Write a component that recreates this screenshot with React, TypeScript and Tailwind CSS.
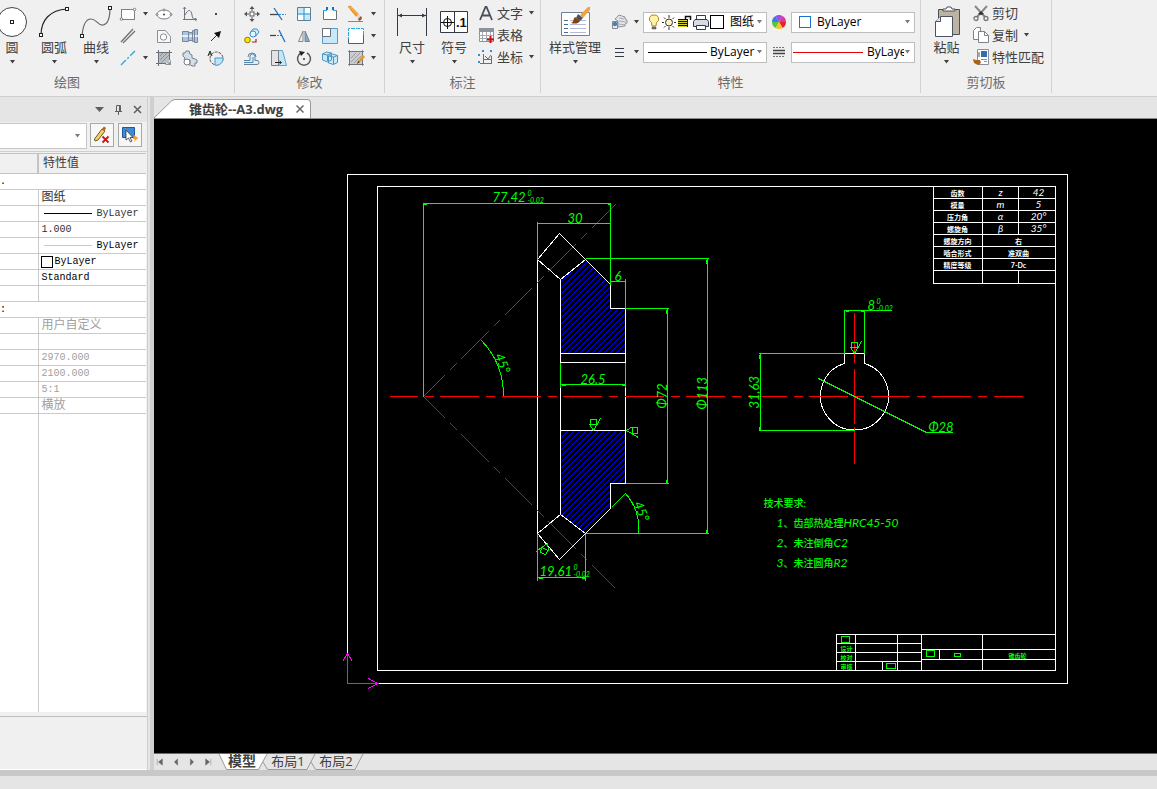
import type { ReactNode } from "react";
import { clsx } from "clsx";

const UI_FONT = "font-['Open_Sans','Noto_Sans_CJK_SC',sans-serif]";
const GRID_FONT = "font-['Liberation_Mono','Noto_Sans_CJK_SC',monospace]";

function Caret({ className = "text-[#404040]" }: Readonly<{ className?: string }>) {
  return (
    <svg width="7" height="4" viewBox="0 0 7 4" className={clsx("shrink-0", className)} aria-hidden="true">
      <path d="M1 0h5L3.500 3.500z" fill="currentColor" />
    </svg>
  );
}

type IconProps = Readonly<{ children: ReactNode; size?: number }>;

function Icon({ children, size = 18 }: IconProps) {
  return (
    <svg width={size} height={size} viewBox={`0 0 ${size} ${size}`} fill="none" className="shrink-0" aria-hidden="true">
      {children}
    </svg>
  );
}

/* ---------- draw icons ---------- */

const Grip = ({ x, y }: { x: number; y: number }) => (
  <rect x={x - 1.5} y={y - 1.5} width="3" height="3" fill="#fff" stroke="#222" />
);

const CircleIcon = () => (
  <svg width="24" height="32" viewBox="0 0 24 32" className="overflow-visible" aria-hidden="true">
    <circle cx="12" cy="16" r="14.500" fill="#fff" stroke="#3c4350" />
    <Grip x={12} y={16} />
  </svg>
);

const ArcIcon = () => (
  <svg width="32" height="32" viewBox="0 0 32 32" fill="none" aria-hidden="true">
    <path d="M3 29C3 14 12 4 29 3" stroke="#222" strokeWidth="1.200" />
    <Grip x={3} y={29} />
    <Grip x={29} y={3} />
  </svg>
);

const CurveIcon = () => (
  <svg width="32" height="32" viewBox="0 0 32 32" fill="none" aria-hidden="true">
    <path d="M2 30C3 18 6 13 11 13c6 0 7 7 12 6 5-1 7-9 7-17" stroke="#666" strokeWidth="1.200" />
    <Grip x={2} y={30} />
    <Grip x={30} y={2} />
  </svg>
);

const RectIcon = () => (
  <Icon>
    <rect x="2.500" y="4.500" width="13" height="10" fill="#fff" stroke="#7a7f88" />
    <circle cx="2.500" cy="14" r="1.300" fill="#fff" stroke="#7a7f88" />
    <circle cx="15.500" cy="4.500" r="1.300" fill="#fff" stroke="#7a7f88" />
  </Icon>
);

const EllipseIcon = () => (
  <Icon>
    <ellipse cx="9" cy="9.500" rx="7" ry="4.500" fill="#fff" stroke="#7a7f88" />
    <circle cx="9" cy="9.500" r="1" fill="#444" />
    <circle cx="2" cy="9.500" r="1" fill="#fff" stroke="#7a7f88" />
    <circle cx="9" cy="5" r="1" fill="#fff" stroke="#7a7f88" />
    <circle cx="16" cy="9.500" r="1" fill="#fff" stroke="#7a7f88" />
  </Icon>
);

const GraphIcon = () => (
  <Icon>
    <path d="M3.500 2v13M2 14.500h14M4 10c3-6 6-6 7 0s2 3 4 4" stroke="#70767f" />
    <path d="M2 4l1.500-2L5 4M14 13l2 1.500-2 1.500" stroke="#70767f" strokeWidth=".8" />
  </Icon>
);

const PointIcon = () => (
  <Icon>
    <rect x="8" y="8" width="2" height="2" fill="#444" />
  </Icon>
);

const ParallelIcon = () => (
  <Icon>
    <path d="M2 15L14 2M4 16L16 4" stroke="#6b7078" strokeWidth="1.300" />
  </Icon>
);

const HoleIcon = () => (
  <Icon>
    <path d="M2.500 3.500h8l5 6v6h-13z" fill="#f8f8f8" stroke="#8a8f98" />
    <circle cx="8.500" cy="10" r="3.200" fill="#fff" stroke="#8a8f98" />
  </Icon>
);

const ShaftIcon = () => (
  <Icon>
    <path d="M1.500 4.500h6v1h4v-2h2v-1h3v13h-3v-1h-2v-1h-4v1h-6z" fill="#a9c3e4" stroke="#7a8798" />
    <path d="M1 9h16" stroke="#fff" strokeWidth="1.500" />
    <path d="M7.500 5v9M11.500 4v10M13.500 3v12" stroke="#7a8798" />
  </Icon>
);

const ArrowIcon = () => (
  <Icon>
    <path d="M4 14l6-6" stroke="#333" />
    <path d="M14 4l-2 7-5-5z" fill="#111" />
  </Icon>
);

const CenterlineIcon = () => (
  <Icon>
    <path d="M2 16L16 2" stroke="#29abe2" strokeWidth="1.400" strokeDasharray="7 2 2 2" />
  </Icon>
);

const HatchIcon = () => (
  <Icon>
    <rect x="4" y="4" width="10" height="10" fill="#b9bdc4" />
    <path d="M3.500 1v16M14.500 1v10M1 3.500h16M1 14.500h10" stroke="#6b7078" />
    <path d="M5 7l3-3M5 11l7-7M6 14l8-8" stroke="#8d929a" />
    <path d="M10 15c4 0 5-2 6-5v6h-5z" fill="#8d929a" />
  </Icon>
);

const GearIcon = () => (
  <Icon>
    <path d="M2 7V4h2l1-2h3l1 3 2 1v3l3 1 2 1v3h-2v3h-3l-1-1H8" fill="#d5deeb" stroke="#77808d" />
    <path d="M2 7l2 2-1 2h6v4" fill="#d5deeb" stroke="#77808d" />
    <circle cx="6" cy="13" r="3" fill="#fff" stroke="#77808d" />
  </Icon>
);

const RegionIcon = () => (
  <Icon>
    <circle cx="9.500" cy="9.500" r="6.500" stroke="#555" strokeDasharray="3 1" />
    <path d="M8 9h8a6.500 6.500 0 0 1-8 7z" fill="#bfe4f7" stroke="#4a9bd0" />
    <path d="M1 7l2-5 2 5M2 5h2" stroke="#222" />
  </Icon>
);

/* ---------- modify icons ---------- */

const MoveIcon = () => (
  <Icon>
    <rect x="7" y="7" width="4" height="4" fill="#fff" stroke="#555" />
    <path d="M9 1l2.500 3h-5zM9 17l2.500-3h-5zM1 9l3-2.500v5zM17 9l-3-2.500v5z" fill="#555" />
    <path d="M9 3v3M9 12v3M3 9h3M12 9h3" stroke="#555" />
  </Icon>
);

const TrimIcon = () => (
  <Icon>
    <path d="M1 9.500h8" stroke="#444" strokeWidth="1.300" />
    <path d="M10 9.500h7" stroke="#2f8fd8" strokeDasharray="2 1" />
    <path d="M5 3l8 12" stroke="#1a6fc0" strokeWidth="1.300" />
  </Icon>
);

const ArrayIcon = () => (
  <Icon>
    <path d="M2.500 2.500h13v13h-13z" fill="#c6e9fa" stroke="#5a7f99" />
    <path d="M3 10h5v5H3zM10 3h5v5h-5z" fill="#fff" />
    <path d="M9 3v12M3 9h12" stroke="#3c93cc" />
  </Icon>
);

const BreakIcon = () => (
  <Icon>
    <path d="M2.500 5.500h13v9h-13z" fill="#fff" stroke="#6b7078" />
    <path d="M5 5h8" stroke="#f0f0f0" strokeWidth="3" />
    <path d="M3 5.500h3M12 5.500h3" stroke="#29abe2" />
    <path d="M5 2h2v3H5zM11 2h2v3h-2z" fill="#1a6fc0" />
  </Icon>
);

const PencilIcon = () => (
  <Icon>
    <path d="M1 2l3-1 8 8-3 3z" fill="#f4a93c" />
    <path d="M3 4l7 7M1 2l3-1" stroke="#d98c1c" />
    <path d="M9 12l3-3 2 2-3 3z" fill="#d9dbe0" />
    <path d="M11 14l3-3 1 2-1 2-2 1z" fill="#a1531c" />
    <path d="M1 16.500h15" stroke="#888" />
  </Icon>
);

const CopyObjIcon = () => (
  <Icon>
    <path d="M7 6l3-4h4l2 3-3 4H9z" fill="#d2ecfa" stroke="#3c93cc" />
    <circle cx="10" cy="7" r="3" stroke="#3c93cc" fill="#e4f4fc" />
    <circle cx="4.500" cy="13" r="2.800" fill="#ffe600" stroke="#8a7a00" />
    <path d="M9 15h4v-3" stroke="#a11d2b" strokeWidth="1.200" />
  </Icon>
);

const ExtendIcon = () => (
  <Icon>
    <path d="M1 8.500h6" stroke="#444" strokeWidth="1.300" />
    <path d="M8 8.500h5" stroke="#2f8fd8" strokeDasharray="2 1" />
    <path d="M10 3l6 12" stroke="#1a6fc0" strokeWidth="1.300" />
  </Icon>
);

const MirrorIcon = () => (
  <Icon>
    <path d="M8 4v10.500H3.500z" fill="#eee" stroke="#888" />
    <path d="M10 4v10.500h4.500z" fill="#8fa7bd" stroke="#6e8498" />
  </Icon>
);

const ScaleIcon = () => (
  <Icon>
    <path d="M1.500 1.500h15v15h-15z" fill="#c6e9fa" stroke="#5a9cc4" />
    <path d="M1.500 1.500h8v8h-8z" fill="#fff" stroke="#6b7078" />
  </Icon>
);

const StretchBoxIcon = () => (
  <Icon>
    <path d="M2 2h15v14H2z" fill="#fff" />
    <path d="M1.500 14V1.500H16.500V14" stroke="#29abe2" strokeDasharray="4 1" />
    <path d="M1.500 12v4.500h15V8" stroke="#555d68" />
  </Icon>
);

const OffsetIcon = () => (
  <Icon>
    <path d="M1 11.500h6v-4a2 2 0 0 1 5 0v4h2a2 2 0 0 1 0 4H1" stroke="#6b8197" fill="#e0eef8" />
    <path d="M1 13.500h9V8" stroke="#4a88b5" />
    <path d="M5 8a4 4 0 0 1 8 0" stroke="#4a88b5" />
  </Icon>
);

const TaperIcon = () => (
  <Icon>
    <path d="M9.500 1.500h4l4 15h-8z" fill="#c3e7f9" stroke="#59a8d4" />
    <path d="M2.500 1.500h7v15h-7z" fill="#e3e3e3" stroke="#7a7f88" />
    <path d="M6 13.500h6M10.500 12l2 1.500-2 1.500" stroke="#222" />
  </Icon>
);

const RotateIcon = () => (
  <Icon>
    <path d="M6 4A6.500 6.500 0 1 0 12 4" stroke="#555" strokeWidth="1.500" />
    <path d="M4 2l6 1-4 4z" fill="#222" />
    <circle cx="9" cy="10" r="1" fill="#333" />
  </Icon>
);

const BlocksIcon = () => (
  <Icon>
    <path d="M1.500 5l4-2 5 1v7l-4 2-5-2zM7.500 7l4-2 5 1.500v7l-4 2-5-1.500z" fill="#c9e9f9" stroke="#4c94c2" />
    <path d="M1.500 5l5 1v6M6.500 6l4-2M7.500 7l5 1v7M12.500 8l4-1.500" stroke="#4c94c2" />
  </Icon>
);

const HatchEditIcon = () => (
  <Icon>
    <path d="M2.500 2.500h13v13h-13z" fill="#c9ccd1" stroke="#70757d" />
    <path d="M1 2.500h16M1 15.500h16M2.500 1v16M15.500 1v16" stroke="#70757d" strokeWidth=".8" />
    <path d="M4 9l5-5M4 13l9-9M7 14l7-7" stroke="#9a9ea5" />
    <path d="M11 12l5-6 2 2-5 5z" fill="#e5952c" />
    <path d="M11 12l-1 3 3-2z" fill="#5a2d0c" />
  </Icon>
);

/* ---------- annotate, properties and clipboard icons ---------- */

const DimensionIcon = () => (
  <svg width="32" height="32" viewBox="0 0 32 32" fill="none" aria-hidden="true">
    <path d="M1.500 2v28M30.500 2v28" stroke="#333a45" />
    <path d="M2 9.500h28" stroke="#333a45" />
    <path d="M2 9.500l4-2v4zM30 9.500l-4-2v4z" fill="#333a45" />
  </svg>
);

const SymbolIcon = () => (
  <svg width="32" height="32" viewBox="0 0 32 32" fill="none" aria-hidden="true">
    <path d="M2.500 5.500h27v21h-27z" fill="#fff" stroke="#333a45" />
    <path d="M16.500 5v22" stroke="#333a45" />
    <circle cx="9.500" cy="16.500" r="4" stroke="#111" />
    <path d="M9.500 10v13M3 16.500h13" stroke="#111" />
    <text x="18" y="21" className="text-[13px] font-bold font-['Liberation_Sans']" fill="#111">
      .1
    </text>
  </svg>
);

const LetterIcon = () => (
  <Icon>
    <path d="M3 16L8.500 3h1L15 16M5 11.500h8" stroke="#4a505a" strokeWidth="1.800" />
  </Icon>
);

const TableIcon = () => (
  <Icon>
    <path d="M2.500 2.500h14v13h-14z" fill="#fff" stroke="#8d939c" />
    <path d="M2 2h15v4H2z" fill="#8d939c" />
    <path d="M2 9.500h14M2 12.500h14M5.500 6v9M9.500 6v9M13.500 6v9" stroke="#a4a9b1" />
    <path d="M13.500 10v7M10 13.500h7" stroke="#c4141c" strokeWidth="2" />
  </Icon>
);

const CoordIcon = () => (
  <Icon>
    <path d="M6.500 6v10M3 15.500h11M8 8l3 3 3-4M14.500 8v8M7 11.500h7" stroke="#6b7078" />
    <path d="M6 2v2M14 2v2M2 6v2M2 13v2" stroke="#2f8fd8" strokeWidth="2" />
  </Icon>
);

const StyleIcon = () => (
  <svg width="32" height="32" viewBox="0 0 32 32" fill="none" aria-hidden="true">
    <path d="M2.500 6.500h28v23h-28z" fill="#fff" stroke="#6d8299" />
    <path d="M5 14.500h4M5 18.500h4M5 22.500h4M5 26.500h4" stroke="#4b6a8d" />
    <path d="M11 14.500h16M11 18.500h16M11 22.500h16M11 26.500h16" stroke="#b3b9da" />
    <path d="M21 9l8-8h2v3l-7 8z" fill="#f0a33a" />
    <path d="M19 8l5 4-3 3-4-3z" fill="#49515d" />
    <path d="M16 11l5 4c-2 3-5 3-9 2 3-1 2-4 4-6z" fill="#7d4312" />
  </svg>
);

const LayersIcon = () => (
  <Icon>
    <path d="M5 6l4-4 6 2v2l2 1v3l-2 1v2l-7 1V8z" fill="#e4e6ea" stroke="#8d939c" />
    <path d="M9 5l5 1M9 8l7 1M9 11l6 1" stroke="#a4a9b1" />
    <path d="M2.500 8.500h5v7h-5z" fill="#e8eef5" stroke="#7d8894" />
    <circle cx="5" cy="11" r="2.200" fill="#4a7fb0" />
  </Icon>
);

const LinesIcon = () => (
  <Icon>
    <path d="M5 5.500h9M5 9.500h9M5 13.500h9" stroke="#333a45" />
  </Icon>
);

const BulbIcon = () => (
  <svg width="12" height="18" viewBox="0 0 12 18" fill="none" className="shrink-0" aria-hidden="true">
    <path d="M6 2a4 4 0 0 1 2.500 7.500L8 13H4l-.5-3.500A4 4 0 0 1 6 2z" fill="#fff3a8" stroke="#b5831a" />
    <path d="M4 14h4v2H4z" fill="#777" stroke="#444" strokeWidth=".5" />
  </svg>
);

const SunIcon = () => (
  <svg width="16" height="18" viewBox="0 0 16 18" fill="none" className="shrink-0" aria-hidden="true">
    <circle cx="8" cy="9.500" r="3.500" fill="#fff3c4" stroke="#333" />
    <path d="M8 2v3M8 14v3M1 9.500h2M13 9.500h2M3 4.500l1.500 1.500M13 4.500L11.500 6M3 14.500L4.500 13M13 14.500L11.500 13" stroke="#333" />
  </svg>
);

const LockIcon = () => (
  <svg width="14" height="18" viewBox="0 0 14 18" fill="none" className="shrink-0" aria-hidden="true">
    <path d="M7.500 7V3.500h5V7" stroke="#111" strokeWidth="1.500" />
    <path d="M0 6h10v8H0z" fill="#d3cf2a" />
    <path d="M0 6.500h10M0 8.500h10M0 10.500h10M0 12.500h10M9.500 6v8" stroke="#111" />
  </svg>
);

const PrinterIcon = () => (
  <svg width="16" height="18" viewBox="0 0 16 18" fill="none" className="shrink-0" aria-hidden="true">
    <path d="M3.500 6.500v-4h9v4" fill="#fff" stroke="#333a45" />
    <path d="M2 6.500h12l1.500 2v5H.5v-5z" fill="#d7dbe2" stroke="#333a45" />
    <path d="M3.500 12.500h9v4h-9z" fill="#fff" stroke="#333a45" />
  </svg>
);

const WheelIcon = () => (
  <Icon size={14}>
    <path d="M7 7L3.500 1a7 7 0 0 1 7 0z" fill="#a04be0" />
    <path d="M7 7l3.500-6A7 7 0 0 1 14 7z" fill="#e0359a" />
    <path d="M7 7h7a7 7 0 0 1-3.500 6z" fill="#e22626" />
    <path d="M7 7l3.500 6a7 7 0 0 1-7 0z" fill="#f5c623" />
    <path d="M7 7l-3.500 6A7 7 0 0 1 0 7z" fill="#5cc437" />
    <path d="M7 7H0a7 7 0 0 1 3.500-6z" fill="#3b7bea" />
  </Icon>
);

const LinetypeIcon = () => (
  <Icon size={14}>
    <path d="M1 2.500h12M1 11.500h12" stroke="#777" strokeDasharray="2 1" />
    <path d="M1 5.500h12M1 8.500h12" stroke="#444" strokeWidth="1.500" />
  </Icon>
);

const PasteIcon = () => (
  <svg width="32" height="32" viewBox="0 0 32 32" fill="none" aria-hidden="true">
    <path d="M7.500 3.500h21v25h-21z" fill="#bdb3a5" stroke="#4b4f58" />
    <path d="M12 5h12v-2h-3l-1-2h-4l-1 2h-3z" fill="#fff" stroke="#4b4f58" />
    <path d="M9.500 10.500h12v20h-17v-15z" fill="#fff" stroke="#4b5361" />
    <path d="M9.500 10.500v5h-5" fill="#e6e6e6" stroke="#4b5361" />
  </svg>
);

const CutIcon = () => (
  <Icon>
    <path d="M3 2l10 11M15 2L5 13" stroke="#888" strokeWidth="2" />
    <path d="M6 10l3-3 3 3-3 1z" fill="#333" />
    <circle cx="4" cy="14.500" r="2" stroke="#777" strokeWidth="1.300" />
    <circle cx="14" cy="14.500" r="2" stroke="#777" strokeWidth="1.300" />
  </Icon>
);

const CopyIcon = () => (
  <Icon>
    <path d="M1.500 4.500l3-3h4v12h-7z" fill="#fff" stroke="#7d828b" />
    <path d="M6.500 5.500h6l4 4v7h-10z" fill="#fff" stroke="#7d828b" />
    <path d="M12.500 5.500v4h4" stroke="#7d828b" />
  </Icon>
);

const MatchIcon = () => (
  <Icon>
    <path d="M5.500 1.500h11v15h-11z" fill="#fff" stroke="#8a8f98" />
    <path d="M9 3h6v6H9z" fill="#2f6fae" />
    <path d="M7 4v5" stroke="#555" />
    <path d="M9 11.500h6M12 13.500h3" stroke="#8a8f98" />
    <path d="M1 11l3 1h4l1 3-3 2-4-2z" fill="#a8641a" />
  </Icon>
);

/* ---------- ribbon ---------- */

type RibbonGroupProps = Readonly<{ title: string; width: string; titleClass?: string; children: ReactNode }>;

function RibbonGroup({ title, width, titleClass, children }: RibbonGroupProps) {
  return (
    <section aria-label={title} className={clsx("flex shrink-0 flex-col", width)}>
      <div className="flex h-[93px] flex-col border-r border-[#d2d2d2]">
        <div className="flex h-[72px] items-start">{children}</div>
        <h2 className={clsx("text-center text-[13px] leading-5 text-[#6c6c6c]", titleClass)}>{title}</h2>
      </div>
    </section>
  );
}

type BigButtonProps = Readonly<{ label: string; icon: ReactNode; className?: string }>;

function BigButton({ label, icon, className = "w-[42px]" }: BigButtonProps) {
  return (
    <button type="button" className={clsx("flex shrink-0 flex-col items-center pt-1.5", className)}>
      <span className="flex h-8 items-center">{icon}</span>
      <span className="text-[13px] leading-[18px] whitespace-nowrap">{label}</span>
      <span className="flex h-3 items-center">
        <Caret />
      </span>
    </button>
  );
}

function IconButton({ label, children }: Readonly<{ label: string; children: ReactNode }>) {
  return (
    <button type="button" aria-label={label} className="flex h-[22px] items-center justify-center">
      {children}
    </button>
  );
}

type RowButtonProps = Readonly<{ label: string; icon: ReactNode; caret?: boolean }>;

function RowButton({ label, icon, caret = false }: RowButtonProps) {
  return (
    <button type="button" className="flex h-[22px] items-center gap-0.5">
      {icon}
      <span className="text-[13px] leading-5">{label}</span>
      {caret && (
        <span className="pl-[3px]">
          <Caret />
        </span>
      )}
    </button>
  );
}

type ComboProps = Readonly<{ label: string; value: string; children?: ReactNode }>;

function Combo({ label, value, children }: ComboProps) {
  return (
    <div className="flex h-[21px] w-[124px] items-center border border-[#bdbdbd] bg-white pr-[3px]">
      {children}
      <select
        aria-label={label}
        className="min-w-0 flex-1 appearance-none overflow-hidden bg-transparent text-[12px] leading-4 text-black"
      >
        <option>{value}</option>
      </select>
      <Caret className="text-[#7a7a7a]" />
    </div>
  );
}

function Ribbon() {
  return (
    <header className="flex h-[97px] overflow-hidden border-b border-[#d0d0d0] bg-[#f0f0f0] text-[#404040]">
      <RibbonGroup title="绘图" width="w-[235px]" titleClass="pr-[100px]">
        <div className="flex">
          <BigButton label="圆" icon={<CircleIcon />} className="mr-[9px] w-6" />
          <BigButton label="圆弧" icon={<ArcIcon />} />
          <BigButton label="曲线" icon={<CurveIcon />} />
        </div>
        <div className="grid grid-cols-[22px_12px_26px_26px_26px] pt-[3px]">
          <IconButton label="矩形"><RectIcon /></IconButton>
          <IconButton label="矩形选项"><Caret /></IconButton>
          <IconButton label="椭圆"><EllipseIcon /></IconButton>
          <IconButton label="公式曲线"><GraphIcon /></IconButton>
          <IconButton label="点"><PointIcon /></IconButton>
          <IconButton label="平行线"><ParallelIcon /></IconButton>
          <span />
          <IconButton label="孔"><HoleIcon /></IconButton>
          <IconButton label="轴"><ShaftIcon /></IconButton>
          <IconButton label="箭头"><ArrowIcon /></IconButton>
          <IconButton label="中心线"><CenterlineIcon /></IconButton>
          <IconButton label="中心线选项"><Caret /></IconButton>
          <IconButton label="剖面线"><HatchIcon /></IconButton>
          <IconButton label="齿轮"><GearIcon /></IconButton>
          <IconButton label="局部放大"><RegionIcon /></IconButton>
        </div>
      </RibbonGroup>

      <RibbonGroup title="修改" width="w-[150px]">
        <div className="grid grid-cols-[26px_26px_26px_26px_26px_9px] pt-[3px] pl-1">
          <IconButton label="平移"><MoveIcon /></IconButton>
          <IconButton label="裁剪"><TrimIcon /></IconButton>
          <IconButton label="阵列"><ArrayIcon /></IconButton>
          <IconButton label="打断"><BreakIcon /></IconButton>
          <IconButton label="删除"><PencilIcon /></IconButton>
          <IconButton label="删除选项"><Caret /></IconButton>
          <IconButton label="平移复制"><CopyObjIcon /></IconButton>
          <IconButton label="延伸"><ExtendIcon /></IconButton>
          <IconButton label="镜像"><MirrorIcon /></IconButton>
          <IconButton label="缩放"><ScaleIcon /></IconButton>
          <IconButton label="拉伸"><StretchBoxIcon /></IconButton>
          <IconButton label="拉伸选项"><Caret /></IconButton>
          <IconButton label="等距线"><OffsetIcon /></IconButton>
          <IconButton label="斜度"><TaperIcon /></IconButton>
          <IconButton label="旋转"><RotateIcon /></IconButton>
          <IconButton label="分解"><BlocksIcon /></IconButton>
          <IconButton label="编辑填充"><HatchEditIcon /></IconButton>
          <IconButton label="填充选项"><Caret /></IconButton>
        </div>
      </RibbonGroup>

      <RibbonGroup title="标注" width="w-[156px]">
        <div className="flex pl-1.5">
          <BigButton label="尺寸" icon={<DimensionIcon />} />
          <BigButton label="符号" icon={<SymbolIcon />} />
        </div>
        <div className="flex flex-col pt-0.5 pl-[2px]">
          <RowButton label="文字" icon={<LetterIcon />} caret />
          <RowButton label="表格" icon={<TableIcon />} />
          <RowButton label="坐标" icon={<CoordIcon />} caret />
        </div>
      </RibbonGroup>

      <RibbonGroup title="特性" width="w-[380px]">
        <BigButton label="样式管理" icon={<StyleIcon />} className="w-[68px]" />
        <div className="grid grid-cols-[20px_14px_124px_24px_124px] items-center gap-y-2 pt-[11px]">
          <IconButton label="图层"><LayersIcon /></IconButton>
          <IconButton label="图层选项"><Caret /></IconButton>
          <Combo label="当前图层" value="图纸">
            <span className="flex items-center gap-px pr-1.5 pl-1">
              <BulbIcon />
              <SunIcon />
              <LockIcon />
              <PrinterIcon />
              <span className="h-3.5 w-3.5 shrink-0 border border-black bg-white" />
            </span>
          </Combo>
          <IconButton label="颜色"><WheelIcon /></IconButton>
          <Combo label="当前颜色" value="ByLayer">
            <span className="mr-1.5 ml-[7px] h-3 w-3 border border-[#1874cd] bg-white" />
          </Combo>
          <IconButton label="线宽"><LinesIcon /></IconButton>
          <IconButton label="线宽选项"><Caret /></IconButton>
          <Combo label="当前线宽" value="ByLayer">
            <span className="mr-[3px] ml-1 h-px w-[59px] shrink-0 bg-black" />
          </Combo>
          <IconButton label="线型"><LinetypeIcon /></IconButton>
          <Combo label="当前线型" value="ByLayer">
            <span className="mr-1 ml-px h-px w-[70px] shrink-0 bg-[#e60000]" />
          </Combo>
        </div>
      </RibbonGroup>

      <RibbonGroup title="剪切板" width="w-[131px]">
        <BigButton label="粘贴" icon={<PasteIcon />} className="w-[51px]" />
        <div className="flex flex-col pt-0.5">
          <RowButton label="剪切" icon={<CutIcon />} />
          <RowButton label="复制" icon={<CopyIcon />} caret />
          <RowButton label="特性匹配" icon={<MatchIcon />} />
        </div>
      </RibbonGroup>
    </header>
  );
}

/* ---------- property panel ---------- */

type PropertyRow = {
  kind?: "category";
  lead?: string;
  value?: string;
  swatch?: "line" | "faint" | "box";
  tone?: "strong" | "muted";
};

const PROPERTY_ROWS: PropertyRow[] = [
  { kind: "category", lead: "." },
  { value: "图纸" },
  { value: "ByLayer", swatch: "line" },
  { value: "1.000" },
  { value: "ByLayer", swatch: "faint", tone: "strong" },
  { value: "ByLayer", swatch: "box", tone: "strong" },
  { value: "Standard", tone: "strong" },
  {},
  { kind: "category", lead: ":" },
  { value: "用户自定义", tone: "muted" },
  {},
  { value: "2970.000", tone: "muted" },
  { value: "2100.000", tone: "muted" },
  { value: "5:1", tone: "muted" },
  { value: "横放", tone: "muted" },
];

function PropertyValue({ row }: Readonly<{ row: PropertyRow }>) {
  const isCjk = /[\u4e00-\u9fff]/.test(row.value ?? "");
  return (
    <span
      className={clsx(
        "flex h-[15px] items-center whitespace-nowrap",
        isCjk ? "text-[12px]" : "text-[10px]",
        row.tone === "muted" ? "text-[#a0a0a0]" : row.tone === "strong" ? "text-black" : "text-[#303030]",
      )}
    >
      {row.swatch === "line" && <span className="mr-[5px] ml-0.5 h-px w-12 bg-black" />}
      {row.swatch === "faint" && <span className="mr-[5px] ml-0.5 h-px w-12 bg-[#c8c8c8]" />}
      {row.swatch === "box" && <span className="-ml-px mr-0.5 h-3 w-3 border border-black bg-white" />}
      {row.value}
    </span>
  );
}

function PropertyPanel() {
  return (
    <aside className="flex w-[148px] shrink-0 flex-col border-r border-[#cfcfcf] bg-[#f0f0f0]">
      <div className="flex h-[25px] items-center justify-end gap-2.5 bg-[#e5e5e5] pr-[5px] text-[#5f5f5f]">
        <button type="button" aria-label="面板菜单">
          <svg width="9" height="5" viewBox="0 0 9 5" aria-hidden="true">
            <path d="M0 0h9L4.500 5z" fill="currentColor" />
          </svg>
        </button>
        <button type="button" aria-label="固定">
          <svg width="9" height="10" viewBox="0 0 9 10" fill="none" stroke="currentColor" aria-hidden="true">
            <path d="M2.500 6V.5h4V6M5.500 1v5M1 6.500h7M4.500 7v3" />
          </svg>
        </button>
        <button type="button" aria-label="关闭面板">
          <svg width="9" height="9" viewBox="0 0 9 9" stroke="currentColor" strokeWidth="1.500" aria-hidden="true">
            <path d="M1 1l7 7M8 1L1 8" />
          </svg>
        </button>
      </div>

      <div className="flex h-[29px] items-start gap-[3px] pt-px">
        <div className="flex h-[26px] w-[87px] items-center border border-l-0 border-[#c6c6c6] bg-white pr-[5px]">
          <select aria-label="选择对象" className="min-w-0 flex-1 appearance-none bg-transparent text-[12px]">
            <option />
          </select>
          <Caret className="text-[#7a7a7a]" />
        </div>
        <button
          type="button"
          aria-label="清除选择"
          className="mr-px flex h-6 w-6 items-center justify-center border border-[#a8a8a8] bg-[#f7f7f7]"
        >
          <Icon>
            <path d="M1.500 13L9 3l3 2-7 9-3 1z" fill="#f5cf6b" stroke="#6f5a22" />
            <path d="M8.500 3.500l2.500-3 2 1.500-1.500 3z" fill="#b5651d" />
            <path d="M9.500 10.500l6 6M15.500 10.500l-6 6" stroke="#d01414" strokeWidth="1.800" />
          </Icon>
        </button>
        <button
          type="button"
          aria-label="快速选择"
          className="flex h-6 w-6 items-center justify-center border border-[#a8a8a8] bg-[#f7f7f7]"
        >
          <Icon>
            <path d="M1.500 1.500h12v10h-12z" fill="#3f8bd6" stroke="#1b5aa3" />
            <path d="M5 4v10l2.500-2 2 4 1.500-1-2-3.500H12z" fill="#fff" stroke="#333" strokeWidth=".8" />
            <path d="M13 9l4 3-4 4 1-3h-2z" fill="#f59f1c" />
          </Icon>
        </button>
      </div>

      <div className="flex flex-1 flex-col border-t border-[#cfcfcf] pt-px pr-px">
        <table className={clsx("h-full w-full table-fixed border-collapse bg-white", GRID_FONT)}>
          <colgroup>
            <col className="w-[38px]" />
            <col />
          </colgroup>
          <thead>
            <tr className="h-5 border-y border-[#c4c4c4] bg-[#f0f0f0]">
              <th aria-label="特性名" className="border-r-2 border-[#c4c4c4] p-0" />
              <th className="p-0 pl-1 text-left text-[12px] leading-4 font-normal text-[#3c3c3c]">特性值</th>
            </tr>
          </thead>
          <tbody>
            {PROPERTY_ROWS.map((row, i) =>
              row.kind === "category" ? (
                <tr key={i} className="h-4 border-b border-[#cbcbcb]">
                  <td colSpan={2} className="p-0 text-[10px] leading-[15px] text-black">
                    {row.lead}
                  </td>
                </tr>
              ) : (
                <tr key={i} className="h-4 border-b border-[#cbcbcb]">
                  <td className="border-r border-[#cbcbcb] p-0" />
                  <td className="overflow-hidden p-0 pl-[3px]">
                    <PropertyValue row={row} />
                  </td>
                </tr>
              ),
            )}
            <tr>
              <td className="border-r border-[#cbcbcb] p-0" />
              <td className="p-0" />
            </tr>
          </tbody>
        </table>
      </div>
      <div className="mt-1 h-[54px] border-t border-[#bdbdbd] border-b border-b-white" />
    </aside>
  );
}

/* ---------- drawing ---------- */

const GREEN = "#00ff00";
const CAD_TEXT = "font-['Lato','Noto_Sans_CJK_SC',sans-serif] italic";

const HATCH_SUMS = Array.from({ length: 64 }, (_, i) => 818 + i * 6);

/** Surface finish mark, pointing down at the origin. */
function FinishMark({ transform }: Readonly<{ transform: string }>) {
  return (
    <g transform={transform}>
      <path d="M-4 -6L0 0L7 -12M-3 -6h7M-3 -11h6v5h-6z" />
    </g>
  );
}

type DimTextProps = Readonly<{ x: number; y: number; text: string; rotate?: number; upper?: string; lower?: string; dx?: number }>;

function DimText({ x, y, text, rotate = 0, upper, lower, dx = 35 }: DimTextProps) {
  return (
    <g transform={`translate(${x} ${y}) rotate(${rotate})`} fill={GREEN} stroke="none" className={CAD_TEXT}>
      <text className="text-[13px]">{text}</text>
      {upper && <text x={dx} y={-6} className="text-[7px]">{upper}</text>}
      {lower && <text x={dx} y={1} className="text-[7px]">{lower}</text>}
    </g>
  );
}

const GEAR_TABLE = [
  ["齿数", "z", "42"],
  ["模量", "m", "5"],
  ["压力角", "α", "20°"],
  ["螺旋角", "β", "35°"],
];

const GEAR_TABLE_WIDE = [
  ["螺旋方向", "右"],
  ["啮合形式", "准双曲"],
  ["精度等级", "7-Dc"],
];

function GearTable() {
  return (
    <g>
      <path
        d="M933 186V283H1055M982 186V283M1018 186V234M1018 270V283M933 198H1055M933 210H1055M933 222H1055M933 234H1055M933 246H1055M933 258H1055M933 270H1055"
        stroke="#fff"
      />
      <g fill="#fff" stroke="none" textAnchor="middle">
        {GEAR_TABLE.map(([name, symbol, value], i) => (
          <g key={name}>
            <text x={957} y={195 + i * 12} className="font-['Noto_Sans_CJK_SC'] text-[7px] font-bold">{name}</text>
            <text x={1000} y={195 + i * 12} className="font-['Lato','Noto_Sans',sans-serif] text-[10px] italic">{symbol}</text>
            <text x={1038} y={195 + i * 12} className="font-['Lato'] text-[10px] italic">{value}</text>
          </g>
        ))}
        {GEAR_TABLE_WIDE.map(([name, value], i) => (
          <g key={name} className="font-['Lato','Noto_Sans_CJK_SC',sans-serif] text-[7px] font-bold">
            <text x={957} y={243 + i * 12}>{name}</text>
            <text x={1018} y={243 + i * 12}>{value}</text>
          </g>
        ))}
      </g>
    </g>
  );
}

function TitleBlock() {
  return (
    <g>
      <path
        d="M836 670V634H1055M855 634V670M897 634V670M921 634V670M982 634V670M836 643H921M836 652H921M836 661H921M882 661V670M921 649H1055M921 659H1055M939 649V659"
        stroke="#fff"
      />
      <path d="M841 636h8v6h-8zM886 663h9v5h-9zM926 650h8v6h-8zM954 653h6v3h-6z" />
      <g fill={GREEN} stroke="none" textAnchor="middle" className="font-['Noto_Sans_CJK_SC'] text-[6px] font-bold">
        <text x={846} y={650}>设计</text>
        <text x={846} y={659}>校对</text>
        <text x={846} y={668}>审核</text>
        <text x={1017} y={657}>锥齿轮</text>
      </g>
    </g>
  );
}

function Drawing() {
  return (
    <svg
      viewBox="154 119 1003 634"
      preserveAspectRatio="xMidYMid meet"
      className="absolute inset-0 h-full w-full"
      role="img"
      aria-label="锥齿轮"
    >
      <defs>
        <clipPath id="section">
          <path d="M560 279L585 259L610 284V308H625V353H560zM560 430H625V483H610V508L585 533L560 514z" />
        </clipPath>
      </defs>
      <g transform="translate(0.5 0.5)" fill="none" stroke={GREEN} strokeWidth="1" shapeRendering="crispEdges">
        {/* sheet frame */}
        <path d="M347 174H1067V683H347zM377 186H1055V670H377z" stroke="#fff" />

        <g clipPath="url(#section)" stroke="#0000ff">
          {HATCH_SUMS.map((sum) => (
            <path key={sum} d={`M${sum - 600} 600L${sum - 200} 200`} />
          ))}
        </g>

        {/* side view outline */}
        <g stroke="#fff">
          <path d="M537 259V533M560 279V514M625 308V483M560 353H625M560 362H625M560 430H625" />
          <path d="M610 284V308H625M610 508V483H625" />
          <path d="M610 284L559 233L537 259L560 279L585 259" />
          <path d="M610 508L559 559L537 533L560 514L585 533" />
        </g>

        {/* bore with keyway */}
        <path d="M844 363V353H864V363A34 34 0 1 1 844 363" stroke="#fff" />

        {/* axes */}
        <g stroke="#ff0000" strokeDasharray="39 7 9 6.500">
          <path d="M389 396H1022" strokeDashoffset="11" />
          <path d="M423 396L615 204" strokeDashoffset="8" />
          <path d="M423 396L615 588" strokeDashoffset="8" />
          <path d="M854 312V463" strokeDasharray="50 6 55 3 38" />
        </g>

        {/* dimension lines */}
        <path d="M423 396V202M610 202V284M423 204H426M423 203H610M607 204H610" />
        <path d="M537 259V221M537 223H610" />
        <path d="M610 281H625M625 278V308" />
        <path d="M585 258H708M707 258V533M585 533H708M706 259V263M706 529V533" />
        <path d="M625 308H668M667 308V483M625 483H668M666 309V313M666 479V483" />
        <path d="M560 362V387M625 362V387M560 384H625M561 385H565M621 385H625" />
        <path d="M481 340A80 80 0 0 1 503 396" />
        <path d="M611 507L625 493A53 53 0 0 1 638 533" />
        <path d="M537 533V580M585 533V580M537 577H585M538 578H542M581 578H585" />
        <path d="M844 353V309M864 353V309M844 310H891M845 311H848M860 311H863" />
        <path d="M758 353H844M758 430H854M760 353V430M759 354V358M759 426V430" />
        <path d="M818 378L926 432H952" />

        <FinishMark transform="translate(593 430)" />
        <FinishMark transform="translate(626 430) rotate(90)" />
        <FinishMark transform="translate(854 353)" />
        <FinishMark transform="translate(547 543) rotate(-155)" />

        <DimText x={492} y={201} text="77,42" upper="0" lower="-0.02" />
        <DimText x={567} y={222} text="30" />
        <DimText x={614} y={280} text="6" />
        <DimText x={580} y={383} text="26.5" />
        <DimText x={494} y={355} text="45°" rotate={68} />
        <DimText x={633} y={503} text="45°" rotate={68} />
        <DimText x={666} y={408} text="Φ72" rotate={-90} />
        <DimText x={706} y={409} text="Φ113" rotate={-90} />
        <DimText x={539} y={575} text="19,61" upper="0" lower="-0.02" dx={34} />
        <DimText x={867} y={309} text="8" upper="0" lower="-0.02" dx={9} />
        <DimText x={758} y={408} text="31,63" rotate={-90} />
        <DimText x={928} y={431} text="Φ28" />

        {/* technical notes */}
        <g fill={GREEN} stroke="none" className={clsx(CAD_TEXT, "text-[12px]")}>
          <text x={763} y={506} className="text-[10px] font-medium not-italic">技术要求:</text>
          <text x={776} y={526}>
            1<tspan className="text-[10px] font-medium not-italic">、齿部热处理</tspan>HRC45-50
          </text>
          <text x={776} y={546}>
            2<tspan className="text-[10px] font-medium not-italic">、未注倒角</tspan>C2
          </text>
          <text x={776} y={566}>
            3<tspan className="text-[10px] font-medium not-italic">、未注圆角</tspan>R2
          </text>
        </g>

        <GearTable />
        <TitleBlock />

        {/* origin marker */}
        <path d="M347 653V683H377M342 661L347 653L352 661M368 678L377 683L368 688" stroke="#ff00ff" />
      </g>
    </svg>
  );
}

/* ---------- document area ---------- */

function DocumentTab() {
  return (
    <div className="flex h-[22px] items-end border-b border-[#8a8a8a] bg-[#e5e5e5]">
      <svg width="21" height="19" viewBox="0 0 21 19" className="shrink-0" aria-hidden="true">
        <path d="M0 19L18 1.500L21 .5V19z" fill="#fff" />
        <path d="M0 19L18 1.500L21 .5" fill="none" stroke="#9a9a9a" />
      </svg>
      <div className="flex h-[19px] w-[136px] items-center justify-between rounded-tr-sm border-t border-r border-[#9a9a9a] bg-white pr-1.5 pl-3.5">
        <button type="button" className="text-[13px] leading-4 font-bold whitespace-nowrap text-[#404040]">
          锥齿轮--A3.dwg
        </button>
        <button type="button" aria-label="关闭文档">
          <svg width="8" height="8" viewBox="0 0 8 8" stroke="#6a6a6a" strokeWidth="1.500" aria-hidden="true">
            <path d="M.5.500l7 7M7.500.500l-7 7" />
          </svg>
        </button>
      </div>
    </div>
  );
}

const NAV_BUTTONS = [
  { label: "第一页", d: "M1.500 1v8M8 1v8L3 5z" },
  { label: "上一页", d: "M7 1v8L3 5z" },
  { label: "下一页", d: "M3 1v8l4-4z" },
  { label: "最后一页", d: "M2 1v8l5-4zM8.500 1v8" },
];

function LayoutTab({ label, active = false }: Readonly<{ label: string; active?: boolean }>) {
  return (
    <button type="button" aria-pressed={active} className="relative flex h-4 w-12 items-start justify-center pr-0.5">
      <svg width="48" height="17" viewBox="0 0 48 17" className="absolute top-0 left-0 overflow-visible" aria-hidden="true">
        <path
          d={active ? "M0 0L7.500 15.500H39.500L48 0" : "M-4 8L.5 15.500H40L48 0"}
          fill={active ? "#fff" : "none"}
          stroke="#9a9a9a"
        />
      </svg>
      <span
        className={clsx(
          "relative whitespace-nowrap text-[#404040]",
          active ? "text-[14px] leading-[14px] font-bold" : "pr-1 text-[13px] leading-[14px]",
        )}
      >
        {label}
      </span>
    </button>
  );
}

function LayoutBar() {
  return (
    <nav className="flex h-[17px] border-t border-[#6a6a6a] bg-[#e5e5e5]">
      <div className="flex w-[65px] items-center gap-2 pl-0.5">
        {NAV_BUTTONS.map((nav) => (
          <button key={nav.label} type="button" aria-label={nav.label}>
            <svg width="8" height="8" viewBox="0 0 10 10" fill="#666" stroke="#666" strokeWidth=".5" aria-hidden="true">
              <path d={nav.d} />
            </svg>
          </button>
        ))}
      </div>
      <LayoutTab label="模型" active />
      <LayoutTab label="布局1" />
      <LayoutTab label="布局2" />
    </nav>
  );
}

export default function App() {
  return (
    <div className={clsx("flex h-screen flex-col overflow-hidden bg-[#e5e5e5]", UI_FONT)}>
      <Ribbon />
      <div className="flex min-h-0 flex-1">
        <PropertyPanel />
        <div className="ml-0.5 w-1 shrink-0 bg-[#cfcfcf]" />
        <main className="flex min-w-0 flex-1 flex-col">
          <DocumentTab />
          <div className="relative min-h-0 flex-1 bg-black">
            <Drawing />
          </div>
          <LayoutBar />
        </main>
      </div>
      <div className="h-1.5 bg-[#c8c8c8]" />
      <footer className="h-[13px] bg-[#e5e5e5]" />
    </div>
  );
}
